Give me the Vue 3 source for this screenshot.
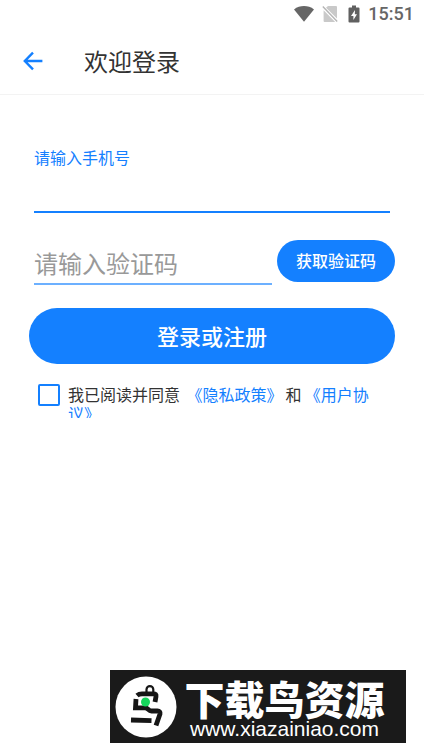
<script setup>
import { ref } from 'vue'

const phone = ref('')
const code = ref('')
const agreed = ref(false)
</script>

<template>
  <div class="screen">
    <div class="status">
      <svg class="wifi" viewBox="0 0 20 16" aria-hidden="true">
        <path d="M0 3.4C6 -1 14 -1 20 3.4L10 15.8Z" fill="#666" />
      </svg>
      <svg class="sim" viewBox="0 0 16 18" aria-hidden="true">
        <path d="M6 1H14a1 1 0 0 1 1 1V13.6L4 2.8ZM1.6 5.2L13.2 17H2.6a1 1 0 0 1-1-1Z" fill="#c9c9c9" />
        <path d="M0.8 1.6L15.2 16.6" stroke="#b4b4b4" stroke-width="1.4" fill="none" />
      </svg>
      <svg class="battery" viewBox="0 0 12 18" aria-hidden="true">
        <path d="M4 0.5H8V2.5H10.5a1 1 0 0 1 1 1V16.5a1 1 0 0 1-1 1H1.5a1 1 0 0 1-1-1V3.5a1 1 0 0 1 1-1H4Z" fill="#606060" />
        <path d="M7 5L3 11H5.4V15L9 9.2H6.8Z" fill="#fff" />
      </svg>
      <span class="clock">15:51</span>
    </div>

    <header class="bar">
      <button class="back" type="button" aria-label="返回">
        <svg viewBox="0 0 20 20" aria-hidden="true">
          <path d="M10 1.6L1.8 10L10 18.4M1.8 10H19.4" fill="none" stroke="#1480ff" stroke-width="2.4" />
        </svg>
      </button>
      <h1>欢迎登录</h1>
    </header>

    <form class="form" @submit.prevent>
      <div class="phone">
        <label for="phone">请输入手机号</label>
        <input id="phone" v-model="phone" type="tel" />
      </div>

      <div class="code-row">
        <input v-model="code" class="code" type="text" placeholder="请输入验证码" aria-label="请输入验证码" />
        <button class="send" type="button">获取验证码</button>
      </div>

      <button class="login" type="submit">登录或注册</button>

      <div class="agree">
        <input id="agree" v-model="agreed" type="checkbox" />
        <label class="terms" for="agree">我已阅读并同意 <a href="#privacy">《隐私政策》</a>和<a href="#terms">《用户协议》</a></label>
      </div>
    </form>

    <footer class="brand">
      <svg class="bird" viewBox="0 0 62 62" aria-hidden="true">
        <circle cx="31" cy="31" r="30.5" fill="#fff" />
        <g fill="none" stroke="#161616" stroke-width="4.8">
          <path d="M31.5 17V13.5a3.4 3.4 0 0 1 6.8 0V17" stroke-width="2.2" />
          <path d="M22 19.5Q24 17.8 27 17.8H38.5Q41.5 17.8 41 20.5L40 26" />
          <path d="M21 23L20.5 31.8H30C33.5 31.8 33 35 36.5 35H42.5Q45.5 35 45 38L41 49.5" />
          <path d="M16 44L36.5 44.6" />
        </g>
        <circle cx="30.5" cy="26" r="4.5" fill="#16d65c" />
      </svg>
      <div class="brand-text">
        <strong>下载鸟资源</strong>
        <span>www.xiazainiao.com</span>
      </div>
    </footer>
  </div>
</template>

<style>
body {
  margin: 0;
  background: #fff;
}
</style>

<style scoped>
* {
  box-sizing: border-box;
}

.screen {
  display: flex;
  flex-direction: column;
  min-height: 100vh;
  padding-bottom: 10px;
  font-family: "Noto Sans CJK SC", sans-serif;
  color: #333;
}

.status {
  display: flex;
  align-items: center;
  justify-content: flex-end;
  height: 28px;
  padding-right: 10px;
}

.wifi {
  width: 20px;
  height: 16px;
  margin-right: 8px;
}

.sim {
  width: 16px;
  height: 18px;
  margin-right: 10px;
}

.battery {
  width: 12px;
  height: 18px;
  margin-right: 8px;
}

.clock {
  font: 500 18px/28px Roboto, sans-serif;
  color: #666;
}

.bar {
  display: flex;
  align-items: center;
  gap: 41px;
  height: 67px;
  padding-left: 23px;
  border-bottom: 1px solid #f3f3f3;
}

button {
  border: 0;
  padding: 0;
  font-family: inherit;
}

.back {
  width: 20px;
  height: 20px;
  background: none;
}

.back svg {
  display: block;
  width: 20px;
  height: 20px;
}

h1 {
  margin: 0;
  font-size: 24px;
  font-weight: 400;
  line-height: 36px;
}

.form {
  display: flex;
  flex-direction: column;
  padding: 50px 29px 0;
}

.phone {
  display: flex;
  flex-direction: column;
  margin: 0 5px;
}

.phone label {
  font-size: 16px;
  line-height: 24px;
  color: #1480ff;
}

.phone input,
.code {
  min-width: 0;
  border: 0;
  border-radius: 0;
  outline: 0;
  padding: 0;
  background: none;
  font-family: inherit;
  font-size: 24px;
}

.phone input {
  height: 44px;
  border-bottom: 2px solid #1480ff;
}

.code-row {
  display: flex;
  align-items: flex-end;
  gap: 5px;
  margin: 27px 0 0 5px;
}

.code {
  flex: 1;
  height: 44px;
  border-bottom: 2px solid #6cb0ff;
}

.code::placeholder {
  color: #999;
  opacity: 1;
}

.send,
.login {
  padding-bottom: 2px;
  background: #1480ff;
  color: #fff;
  font-weight: 500;
}

.send {
  width: 118px;
  height: 42px;
  margin-bottom: 3px;
  border-radius: 21px;
  font-size: 16px;
}

.login {
  height: 56px;
  margin-top: 23px;
  border-radius: 28px;
  font-size: 22px;
}

.agree {
  display: flex;
  align-items: flex-start;
  gap: 8px;
  margin: 20px 16px 0 9px;
}

.agree input {
  flex: none;
  appearance: none;
  width: 22px;
  height: 22px;
  margin: 0;
  border: 2px solid #1480ff;
  border-radius: 2px;
}

.agree input:checked {
  background: #1480ff;
}

.terms {
  height: 34px;
  padding-top: 1px;
  overflow: hidden;
  font-size: 16px;
  line-height: 19px;
}

.terms a {
  margin: 0 3px;
  color: #1480ff;
  text-decoration: none;
}

.brand {
  display: flex;
  align-items: center;
  align-self: flex-end;
  width: 296px;
  height: 73px;
  margin: auto 18px 0 0;
  padding: 0 14px 0 5px;
  background: #1a1a1a;
  color: #fff;
}

.bird {
  flex: none;
  width: 62px;
  height: 62px;
}

.brand-text {
  display: flex;
  flex-direction: column;
  align-items: center;
  flex: 1;
  padding-top: 6px;
  white-space: nowrap;
}

.brand-text strong {
  font-size: 40px;
  font-weight: 900;
  line-height: 38px;
}

.brand-text span {
  font: 21px/24px "Liberation Sans", sans-serif;
}
</style>
